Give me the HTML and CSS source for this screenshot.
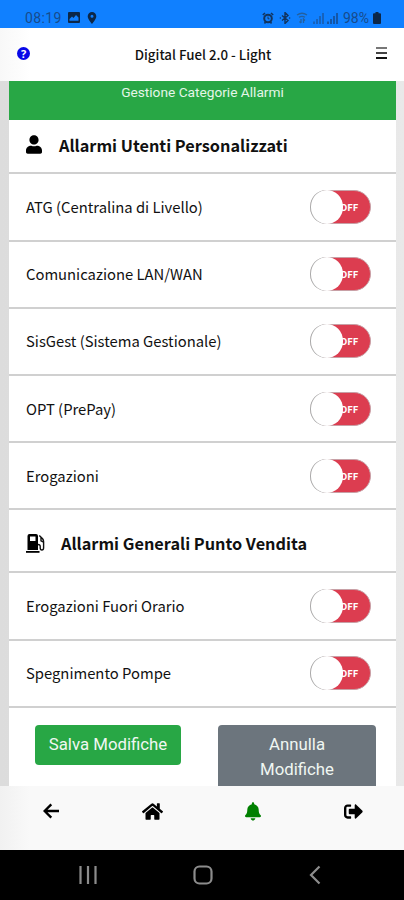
FILE: index.html
```html
<!DOCTYPE html>
<html lang="it">
<head>
    <meta charset="UTF-8">
    <meta name="viewport" content="width=device-width, initial-scale=1.0">
    <title>Digital Fuel 2.0 - Light</title>
    <link rel="stylesheet" href="styles.css">
</head>
<body>
    <div class="status-bar">
        <span class="clock">08:19</span>
        <svg class="st-picture" viewBox="0 0 12 11"><path fill-rule="evenodd" d="M1 0h10a1 1 0 0 1 1 1v9a1 1 0 0 1-1 1H1a1 1 0 0 1-1-1V1a1 1 0 0 1 1-1zm.5 8.800h9V5.500L8 3 5.500 6 4 4.500 1.500 7z"/></svg>
        <svg class="st-pin" viewBox="0 0 10 12"><path fill-rule="evenodd" d="M5 0a4.300 4.300 0 0 1 4.300 4.300C9.300 7.500 5 12 5 12S.7 7.500.7 4.300A4.300 4.300 0 0 1 5 0zm0 2.800a1.500 1.500 0 1 0 0 3 1.500 1.500 0 0 0 0-3z"/></svg>
        <div class="status-right">
            <svg class="st-alarm" viewBox="0 0 12 12"><g fill="none" stroke="#12345f"><circle cx="6" cy="6.500" r="3.800" stroke-width="2"/><path d="M.8 3L3 1M11.200 3L9 1M2.500 11.500l1-1.500M9.500 11.500l-1-1.500" stroke-width="1.600"/><path d="M6 4.500v2.300h1.500"/></g></svg>
            <svg class="st-bt" viewBox="0 0 12 12"><path d="M3 3.500l6 5-3 3V.5l3 3-6 5M.8 6h1M10.200 6h1" fill="none" stroke="#12345f" stroke-width="1.400"/></svg>
            <svg class="st-wifi" viewBox="0 0 12 12"><path d="M1 3q5-3.500 10 0M3 5.300q3-2 6 0M5 7v4M3.500 9.500L5 11M7.500 11V7L9 8.500" fill="none" stroke="#24609f" stroke-width="1.300"/></svg>
            <svg class="st-signal" viewBox="0 0 12 12"><path d="M1 12V9.500M4 12V7M7 12V4M10 12V1" fill="none" stroke="#1b56a0" stroke-width="1.400"/></svg>
            <svg class="st-signal" viewBox="0 0 12 12"><path d="M1 12V9.500M4 12V7M7 12V4M10 12V1" fill="none" stroke="#164a8c" stroke-width="1.500"/></svg>
            <span class="battery">98%</span>
            <svg class="st-battery" viewBox="0 0 8 12"><path d="M2.500 0h3v1.200H7a1 1 0 0 1 1 1V11a1 1 0 0 1-1 1H1a1 1 0 0 1-1-1V2.200a1 1 0 0 1 1-1h1.500z"/></svg>
        </div>
    </div>

    <header class="top-bar">
        <span class="help">?</span>
        <h1>Digital Fuel 2.0 - Light</h1>
        <div class="menu"><i></i><i></i><i></i></div>
    </header>

    <main class="content">
        <div class="card">
            <div class="card-header">Gestione Categorie Allarmi</div>

            <div class="section users">
                <svg viewBox="0 0 448 512"><path d="M224 256c70.700 0 128-57.300 128-128S294.700 0 224 0 96 57.300 96 128s57.300 128 128 128zm89.600 32h-16.700c-22.200 10.200-46.900 16-72.900 16s-50.600-5.800-72.900-16h-16.700C60.200 288 0 348.200 0 422.400V464c0 26.500 21.500 48 48 48h352c26.500 0 48-21.500 48-48v-41.600c0-74.200-60.200-134.400-134.400-134.400z"/></svg>
                <h2>Allarmi Utenti Personalizzati</h2>
            </div>
            <div class="row"><span>ATG (Centralina di Livello)</span><div class="toggle"><b>OFF</b></div></div>
            <div class="row"><span>Comunicazione LAN/WAN</span><div class="toggle"><b>OFF</b></div></div>
            <div class="row"><span>SisGest (Sistema Gestionale)</span><div class="toggle"><b>OFF</b></div></div>
            <div class="row"><span>OPT (PrePay)</span><div class="toggle"><b>OFF</b></div></div>
            <div class="row"><span>Erogazioni</span><div class="toggle"><b>OFF</b></div></div>

            <div class="section station">
                <svg viewBox="0 0 19 19"><path fill-rule="evenodd" d="M3.500 0h6.500a2 2 0 0 1 2 2v14H1.500V2a2 2 0 0 1 2-2zM4 2.500v4.500h5.500V2.500z"/><path d="M0 17h13.500v1.800H0z"/><path d="M13.300 1.500l3.300 3.300q1 1.200 1 3v6q0 2.200-1.700 2.200t-1.700-2.200v-1.500q0-1.800-2.200-1.800M15 3.500v3.300l2.500 1.400" fill="none" stroke="#111" stroke-width="1.400"/></svg>
                <h2>Allarmi Generali Punto Vendita</h2>
            </div>
            <div class="row"><span>Erogazioni Fuori Orario</span><div class="toggle"><b>OFF</b></div></div>
            <div class="row"><span>Spegnimento Pompe</span><div class="toggle"><b>OFF</b></div></div>

            <div class="actions">
                <button class="btn save">Salva Modifiche</button>
                <button class="btn cancel">Annulla<br>Modifiche</button>
            </div>
        </div>
    </main>

    <nav class="bottom-bar">
        <a><svg class="back" viewBox="0 0 16 16"><path d="M8.300 1.300L1.600 8l6.700 6.700M2 8h14" fill="none" stroke="#000" stroke-width="2.400"/></svg></a>
        <a><svg class="home" viewBox="0 0 576 512"><path d="M280.370 148.260L96 300.110V464a16 16 0 0 0 16 16l112.060-.29a16 16 0 0 0 15.920-16V368a16 16 0 0 1 16-16h64a16 16 0 0 1 16 16v95.640a16 16 0 0 0 16 16.050L464 480a16 16 0 0 0 16-16V300L295.670 148.260a12.190 12.190 0 0 0-15.300 0zM571.600 251.470L488 182.560V44.050a12 12 0 0 0-12-12h-56a12 12 0 0 0-12 12v72.610L318.470 43a48 48 0 0 0-61 0L4.340 251.470a12 12 0 0 0-1.600 16.900l25.500 31A12 12 0 0 0 45.150 301l235.220-193.740a12.190 12.190 0 0 1 15.300 0L530.900 301a12 12 0 0 0 16.900-1.600l25.500-31a12 12 0 0 0-1.700-16.930z"/></svg></a>
        <a><svg class="bell" viewBox="0 0 448 512"><path d="M224 512c35.320 0 63.970-28.650 63.970-64H160.030c0 35.350 28.650 64 63.970 64zm215.390-149.710c-19.320-20.760-55.470-51.990-55.470-154.290 0-77.700-54.480-139.900-127.940-155.160V32c0-17.670-14.320-32-31.980-32s-31.980 14.330-31.980 32v20.840C118.560 68.100 64.080 130.300 64.080 208c0 102.300-36.150 133.530-55.470 154.290-6 6.450-8.660 14.160-8.610 21.710.11 16.400 12.980 32 32.100 32h383.800c19.120 0 32-15.600 32.100-32 .05-7.550-2.610-15.270-8.610-21.710z"/></svg></a>
        <a><svg class="exit" viewBox="0 0 512 512"><path d="M497 273L329 441c-15 15-41 4.500-41 -17v-96H152c-13.300 0-24-10.700-24-24v-96c0-13.300 10.700-24 24-24h136V88c0-21.400 25.900-32 41-17l168 168c9.300 9.400 9.300 24.600 0 34zM192 436v-40c0-6.600-5.400-12-12-12H96c-17.700 0-32-14.300-32-32V160c0-17.700 14.300-32 32-32h84c6.600 0 12-5.400 12-12V76c0-6.600-5.400-12-12-12H96c-53 0-96 43-96 96v192c0 53 43 96 96 96h84c6.600 0 12-5.400 12-12z"/></svg></a>
    </nav>

    <div class="system-nav">
        <svg viewBox="0 0 18 20"><path d="M1.500 1v18M9 1v18M16.500 1v18"/></svg>
        <svg viewBox="0 0 20 20"><rect x="1.500" y="1.500" width="17" height="17" rx="5"/></svg>
        <svg viewBox="0 0 12 20"><path d="M10.500 1.500L2 10l8.500 8.500"/></svg>
    </div>
</body>
</html>
```

FILE: styles.css
```css
* {
    box-sizing: border-box;
}

body {
    margin: 0;
    width: 404px;
    height: 900px;
    overflow: hidden;
    display: flex;
    flex-direction: column;
    font-family: "Noto Sans CJK SC", "Open Sans", sans-serif;
    color: #111;
    background-color: #fff;
}

h1, h2 {
    margin: 0;
}

svg {
    display: block;
    flex: none;
}

/* Android status bar */
.status-bar {
    height: 28px;
    flex: none;
    display: flex;
    align-items: center;
    padding: 7px 23px 0 25px;
    background-color: #1080ff;
    color: #174b8c;
    fill: #0c2748;
    font-family: Roboto, sans-serif;
    font-size: 14px;
    line-height: 20px;
}

.clock {
    width: 43px;
    letter-spacing: 0.4px;
}

.st-picture {
    width: 12px;
    height: 11px;
}

.st-pin {
    width: 10px;
    height: 12px;
    margin-left: 7px;
}

.status-right {
    display: flex;
    align-items: center;
    margin-left: auto;
}

.st-alarm, .st-bt, .st-wifi {
    width: 12px;
    height: 12px;
    margin-right: 5px;
}

.st-signal {
    width: 12px;
    height: 12px;
    margin-right: 2px;
}

.battery {
    width: 27px;
    margin-left: 2px;
}

.st-battery {
    width: 8px;
    height: 12px;
    margin-left: 3px;
}

/* App title */
.top-bar {
    height: 53px;
    flex: none;
    display: flex;
    align-items: center;
    justify-content: space-between;
    padding: 0 17px 0 17px;
    background: linear-gradient(to right, #f8f8f8, #fff 30px);
}

.top-bar h1 {
    font-size: 13.300px;
    font-weight: 500;
    line-height: 20px;
    white-space: nowrap;
}

.help {
    width: 13px;
    height: 13px;
    margin-bottom: 2px;
    border-radius: 50%;
    background-color: #0808e8;
    color: #fff;
    font: bold 11px/13px "Open Sans", sans-serif;
    text-align: center;
}

.menu {
    width: 11px;
    display: flex;
    flex-direction: column;
    gap: 3px;
    margin-bottom: 3px;
}

.menu i {
    height: 2px;
    background-color: #444;
}

.menu i:first-child {
    background-color: #777;
}

.menu i:last-child {
    background-color: #111;
}

/* Settings list */
.content {
    height: 705px;
    flex: none;
    overflow: hidden;
    padding: 0 8px 0 9px;
    background: linear-gradient(to right, #dcdcdc, #e9e9e9);
}

.card {
    height: 100%;
    background-color: #fff;
}

.card-header {
    height: 39px;
    background-color: #28a745;
    color: #e4f6e8;
    font-family: Roboto, sans-serif;
    font-size: 13.700px;
    line-height: 22px;
    text-align: center;
}

.section, .row {
    display: flex;
    align-items: center;
    padding: 0 25px 0 17px;
    border-bottom: 2px solid #d0d0d0;
}

.section h2 {
    margin-top: -2px;
    font-size: 16.300px;
    font-weight: 700;
    line-height: 24px;
    white-space: nowrap;
}

.users {
    height: 54.400px;
}

.users svg {
    width: 16px;
    height: 19px;
    margin: -3px 17px 0 0;
}

.station {
    height: 63px;
    padding-top: 7px;
}

.station svg {
    width: 19px;
    height: 19px;
    margin: -2px 16px 0 0;
}

.row {
    height: 67.200px;
    justify-content: space-between;
    font-size: 14.800px;
    line-height: 20px;
}

.row span {
    white-space: nowrap;
}

.toggle {
    position: relative;
    width: 61px;
    height: 34px;
    border-radius: 17px;
    background-color: #dc3d50;
    border: 1px solid #c8a0a6;
    color: #fff;
}

.toggle::before {
    content: "";
    position: absolute;
    left: -1px;
    top: -1px;
    width: 33px;
    height: 34px;
    border-radius: 17px;
    background-color: #fff;
    box-shadow: inset 1px 0 0 #aaa;
    z-index: 1;
}

.toggle b {
    position: absolute;
    left: 29px;
    top: 8px;
    font-size: 9.500px;
    line-height: 16px;
}

.actions {
    display: flex;
    align-items: flex-start;
    justify-content: space-between;
    padding: 17px 20px 0 26px;
}

.btn {
    border: 0;
    border-radius: 4px;
    padding: 7px 0;
    color: #f0f7f2;
    font-family: Roboto, sans-serif;
    font-size: 16.800px;
    line-height: 25px;
}

.save {
    width: 146px;
    height: 40px;
    background-color: #28a745;
}

.cancel {
    width: 158px;
    height: 64px;
    background-color: #6c757d;
}

/* Bottom navigation */
.bottom-bar {
    height: 64px;
    flex: none;
    display: flex;
    align-items: center;
    padding: 0 0 14px 1px;
    background: linear-gradient(to right, #f1f1f1, #f9f9f9 30px);
}

.bottom-bar a {
    width: 101px;
    display: flex;
    justify-content: center;
}

.back {
    width: 16px;
    height: 16px;
}

.home {
    width: 21px;
    height: 19px;
}

.bell {
    width: 16px;
    height: 19px;
    fill: #008000;
}

.exit {
    width: 19px;
    height: 19px;
}

.system-nav {
    height: 50px;
    flex: none;
    display: flex;
    align-items: center;
    justify-content: space-between;
    padding: 0 83px 0 79px;
    background-color: #000;
}

.system-nav svg {
    height: 20px;
    fill: none;
    stroke: #8c8c8c;
    stroke-width: 2.200;
}
```
